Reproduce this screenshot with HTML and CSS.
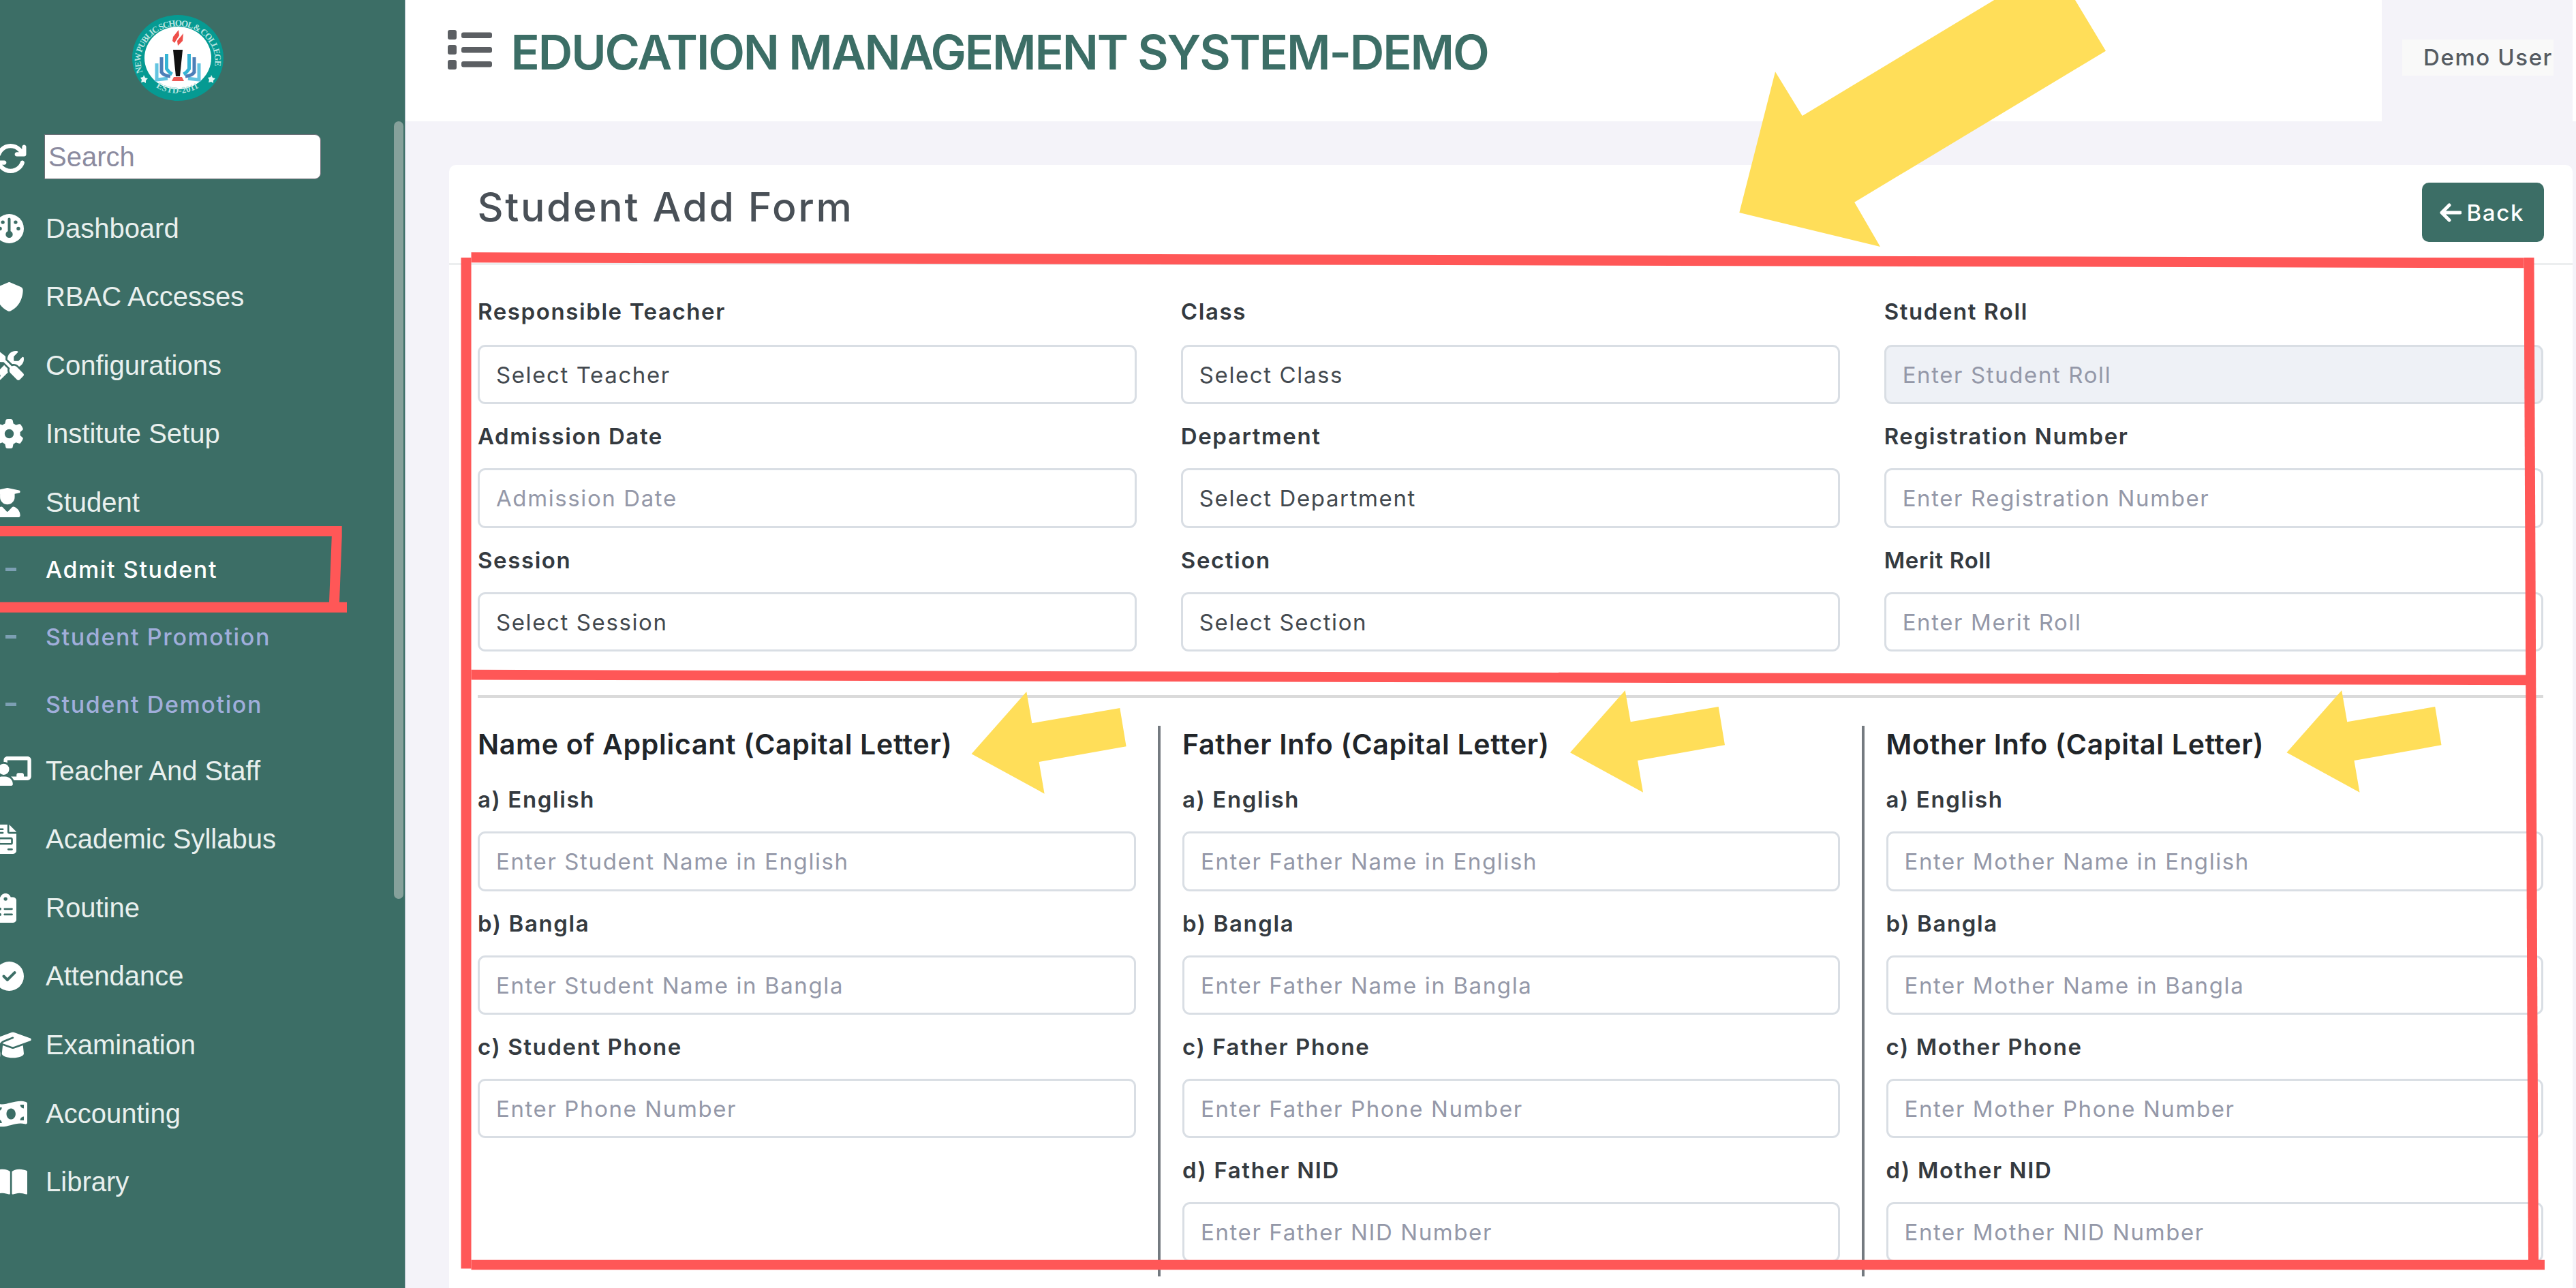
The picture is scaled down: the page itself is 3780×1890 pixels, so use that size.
FILE: index.html
```html
<!DOCTYPE html>
<html lang="en">
<head>
<meta charset="utf-8">
<title>Education Management System</title>
<link rel="stylesheet" href="styles.css">
</head>
<body>
<div class="app">
  <aside class="sidebar">
    <svg class="logo" viewBox="0 0 134 126" preserveAspectRatio="none">
      <defs>
        <path id="ring-top" d="M15.500 84 A54.500 51 0 1 1 118.500 84"/>
        <path id="ring-bottom" d="M22 95 A58 54 0 0 0 112 95"/>
      </defs>
      <ellipse cx="67" cy="63" rx="67" ry="63" fill="#069a92"/>
      <ellipse cx="67" cy="63" rx="49" ry="46" fill="#fff"/>
      <text class="logo-text"><textPath href="#ring-top" textLength="190">NEW PUBLIC SCHOOL &amp; COLLEGE</textPath></text>
      <text class="logo-text"><textPath href="#ring-bottom" startOffset="17" textLength="66">ESTD-2011</textPath></text>
      <path d="M17 88l2 4 4 1-3 3 0 4-3-2-4 1 1-4-2-3 4-1z M116 88l2 4 4 1-3 3 0 4-3-2-4 1 1-4-2-3 4-1z" fill="#e8f6f4"/>
      <path d="M68 22l-8 10 -1 6 3 3 7-11z M75 27l-9 11 1 7 7-7z" fill="#ee4f4a"/>
      <path d="M60 51h14l-4 39h-6z" fill="#111"/>
      <path d="M61 91h12l3 6H58z" fill="#ee5a55"/>
      <g fill="none" stroke-width="5">
        <path d="M36 71v24q10-1 16-2 M98 71v24q-10-1-16-2" stroke="#63c4e0"/>
        <path d="M43 62v22q3 5 13 6 M91 62v22q-3 5-13 6" stroke="#4d7fb8"/>
        <path d="M50.500 57v22q3 5 8 8 M83.500 57v22q-3 5-8 8" stroke="#35b4d4"/>
      </g>
    </svg>
    <div class="search-row">
      <svg class="refresh" viewBox="0 0 512 512"><path d="M105.100 202.600c7.700-21.800 20.200-42.300 37.800-59.800c62.500-62.500 163.800-62.500 226.300 0L386.300 160H352c-17.700 0-32 14.300-32 32s14.300 32 32 32H463.900c17.700 0 32-14.300 32-32V80c0-17.700-14.300-32-32-32s-32 14.300-32 32v35.200L414.400 97.600c-87.500-87.500-229.300-87.500-316.800 0C73.200 122 55.600 150.700 44.800 181.400c-5.900 16.700 2.900 34.900 19.500 40.800s34.900-2.900 40.800-19.500zM39 289.300c-5 1.500-9.800 4.200-13.700 8.200c-4 4-6.700 8.800-8.100 14c-.3 1.200-.6 2.500-.8 3.800c-.3 1.700-.4 3.400-.4 5.100V432c0 17.700 14.300 32 32 32s32-14.300 32-32V396.900l17.600 17.500c87.500 87.400 229.300 87.400 316.700 0c24.400-24.400 42.100-53.100 52.900-83.700c5.900-16.700-2.900-34.900-19.500-40.800s-34.900 2.900-40.800 19.500c-7.700 21.800-20.200 42.300-37.800 59.800c-62.500 62.500-163.800 62.500-226.300 0L125.600 352H160c17.700 0 32-14.300 32-32s-14.300-32-32-32H48.400c-1.600 0-3.200 .1-4.800 .3s-3.100 .5-4.600 1z"/></svg>
      <div class="search-box">Search</div>
    </div>
    <ul class="menu">
      <li><span class="ico"><svg viewBox="0 0 512 512"><circle cx="256" cy="256" r="256"/><g class="cut"><circle cx="144" cy="144" r="32"/><circle cx="368" cy="144" r="32"/><circle cx="96" cy="256" r="32"/><circle cx="416" cy="256" r="32"/><circle cx="256" cy="356" r="62"/><rect x="232" y="64" width="48" height="270" rx="24"/></g></svg></span>Dashboard</li>
      <li><span class="ico"><svg viewBox="0 0 512 512"><path d="M269.400 2.900C265.200 1 260.700 0 256 0s-9.200 1-13.400 2.900L54.300 82.800c-22 9.300-38.400 31-38.300 57.200c.5 99.200 41.300 280.700 213.600 363.200c16.700 8 36.100 8 52.800 0C454.700 420.700 495.500 239.200 496 140c.1-26.200-16.300-47.900-38.300-57.200L269.400 2.900z"/></svg></span>RBAC Accesses</li>
      <li><span class="ico"><svg viewBox="0 0 512 512"><path d="M78.600 5C69.100-2.400 55.600-1.500 47 7L7 47c-8.500 8.500-9.400 22-2.100 31.600l80 104c4.500 5.900 11.600 9.400 19 9.400h54.100l109 109c-14.700 29-10 65.400 14.300 89.600l112 112c12.500 12.500 32.800 12.500 45.300 0l64-64c12.500-12.500 12.500-32.800 0-45.300l-112-112c-24.200-24.200-60.600-29-89.600-14.300l-109-109V104c0-7.500-3.500-14.500-9.400-19L78.600 5zM19.900 396.100C7.200 408.800 0 426.100 0 444.100C0 481.600 30.400 512 67.900 512c18 0 35.300-7.200 48-19.900L233.700 374.300c-7.800-20.900-9-43.600-3.600-65.100l-61.700-61.700L19.900 396.100zM512 144c0-10.500-1.100-20.700-3.200-30.500c-2.400-11.200-16.100-14.100-24.200-6l-63.900 63.900c-3 3-7.100 4.700-11.300 4.700H352c-8.800 0-16-7.200-16-16V102.600c0-4.200 1.700-8.300 4.700-11.300l63.900-63.900c8.100-8.100 5.200-21.800-6-24.200C388.700 1.100 378.500 0 368 0C288.500 0 224 64.500 224 144l0 .8 85.300 85.300c36-9.100 75.800 .5 104 28.700L429 274.500c49-23 83-72.800 83-130.500zM56 432a24 24 0 1 1 48 0 24 24 0 1 1 -48 0z"/></svg></span>Configurations</li>
      <li><span class="ico"><svg viewBox="0 0 512 512"><path d="M495.900 166.600c3.200 8.700 .5 18.400-6.400 24.600l-43.300 39.400c1.100 8.300 1.700 16.800 1.700 25.400s-.6 17.100-1.700 25.400l43.300 39.400c6.900 6.200 9.600 15.900 6.400 24.600c-4.400 11.900-9.700 23.300-15.800 34.300l-4.700 8.100c-6.600 11-14 21.400-22.100 31.200c-5.900 7.200-15.700 9.600-24.500 6.800l-55.700-17.700c-13.400 10.300-28.200 18.900-44 25.400l-12.500 57.100c-2 9.100-9 16.300-18.200 17.800c-13.800 2.300-28 3.500-42.500 3.500s-28.700-1.200-42.500-3.500c-9.200-1.500-16.200-8.700-18.200-17.800l-12.500-57.100c-15.800-6.500-30.600-15.100-44-25.400L83.100 425.900c-8.800 2.800-18.600 .3-24.500-6.800c-8.100-9.800-15.500-20.200-22.100-31.200l-4.700-8.100c-6.100-11-11.400-22.400-15.800-34.300c-3.200-8.700-.5-18.400 6.400-24.600l43.300-39.400C64.600 273.100 64 264.600 64 256s.6-17.100 1.700-25.400L22.400 191.200c-6.900-6.200-9.600-15.900-6.400-24.600c4.400-11.900 9.700-23.300 15.800-34.300l4.700-8.100c6.600-11 14-21.400 22.100-31.200c5.900-7.200 15.700-9.600 24.500-6.800l55.700 17.700c13.400-10.300 28.200-18.900 44-25.400l12.500-57.100c2-9.100 9-16.300 18.200-17.800C227.300 1.200 241.500 0 256 0s28.700 1.200 42.500 3.500c9.200 1.500 16.200 8.700 18.200 17.800l12.500 57.100c15.800 6.500 30.600 15.100 44 25.400l55.700-17.700c8.800-2.800 18.600-.3 24.500 6.800c8.100 9.800 15.500 20.200 22.100 31.200l4.700 8.100c6.100 11 11.400 22.400 15.800 34.300zM256 336a80 80 0 1 0 0-160 80 80 0 1 0 0 160z"/></svg></span>Institute Setup</li>
      <li><span class="ico"><svg viewBox="0 0 448 512"><path d="M219.300 .5c3.100-.6 6.300-.6 9.400 0l200 40C439.900 42.700 448 52.600 448 64s-8.100 21.300-19.300 23.500L352 102.900V160c0 70.700-57.300 128-128 128s-128-57.300-128-128V102.900L48 93.300v65.100l15.700 78.400c.9 4.700-.3 9.600-3.300 13.300s-7.600 5.900-12.400 5.900H16c-4.800 0-9.300-2.100-12.400-5.900s-4.300-8.600-3.300-13.300L16 158.400V86.600C6.500 83.300 0 74.300 0 64C0 52.600 8.100 42.700 19.300 40.500l200-40zM111.900 327.700c10.500-3.400 21.800 .4 29.400 8.500l71 75.500c6.300 6.700 17 6.700 23.300 0l71-75.500c7.600-8.100 18.900-11.900 29.400-8.500C401 348.600 448 409.400 448 481.300c0 17-13.800 30.700-30.700 30.700H30.700C13.800 512 0 498.200 0 481.300c0-71.900 47-132.700 111.900-153.600z"/></svg></span>Student</li>
      <li class="sub active"><span class="dash"></span>Admit Student</li>
      <li class="sub"><span class="dash"></span>Student Promotion</li>
      <li class="sub last"><span class="dash"></span>Student Demotion</li>
      <li><span class="ico"><svg viewBox="0 0 640 512"><path d="M160 64c0-35.300 28.700-64 64-64H576c35.300 0 64 28.700 64 64V352c0 35.300-28.700 64-64 64H336.800c-11.800-25.500-29.900-47.500-52.400-64H384V320c0-17.700 14.300-32 32-32h64c17.700 0 32 14.300 32 32v32h64V64L224 64v49.100C205.200 102.200 183.300 96 160 96V64zm0 64a96 96 0 1 1 0 192 96 96 0 1 1 0-192zM133.300 352h53.300C260.300 352 320 411.700 320 485.300c0 14.700-11.900 26.700-26.700 26.700H26.700C11.900 512 0 500.100 0 485.300C0 411.700 59.700 352 133.300 352z"/></svg></span>Teacher And Staff</li>
      <li><span class="ico"><svg viewBox="0 0 384 512"><path fill-rule="evenodd" d="M64 0C28.700 0 0 28.700 0 64V448c0 35.300 28.700 64 64 64H320c35.300 0 64-28.700 64-64V160H256c-17.700 0-32-14.300-32-32V0H64zM256 0V128H384L256 0zM80 64h64c8.800 0 16 7.200 16 16s-7.200 16-16 16H80c-8.800 0-16-7.200-16-16s7.200-16 16-16zm0 64h64c8.800 0 16 7.200 16 16s-7.200 16-16 16H80c-8.800 0-16-7.200-16-16s7.200-16 16-16zm16 96H288c17.700 0 32 14.300 32 32v64c0 17.700-14.300 32-32 32H96c-17.700 0-32-14.300-32-32V256c0-17.700 14.300-32 32-32zm0 32v64H288V256H96zM240 416h64c8.800 0 16 7.200 16 16s-7.200 16-16 16H240c-8.800 0-16-7.200-16-16s7.200-16 16-16z"/></svg></span>Academic Syllabus</li>
      <li><span class="ico"><svg viewBox="0 0 384 512"><path fill-rule="evenodd" d="M192 0c-41.800 0-77.400 26.700-90.500 64H64C28.700 64 0 92.700 0 128V448c0 35.300 28.700 64 64 64H320c35.300 0 64-28.700 64-64V128c0-35.300-28.700-64-64-64H282.500C269.400 26.700 233.800 0 192 0zm0 64a32 32 0 1 1 0 64 32 32 0 1 1 0-64zM72 272a24 24 0 1 1 48 0 24 24 0 1 1 -48 0zm104-16H304c8.800 0 16 7.200 16 16s-7.200 16-16 16H176c-8.800 0-16-7.200-16-16s7.200-16 16-16zM72 368a24 24 0 1 1 48 0 24 24 0 1 1 -48 0zm88 0c0-8.800 7.200-16 16-16H304c8.800 0 16 7.200 16 16s-7.200 16-16 16H176c-8.800 0-16-7.200-16-16z"/></svg></span>Routine</li>
      <li><span class="ico"><svg viewBox="0 0 512 512"><path fill-rule="evenodd" d="M256 512A256 256 0 1 0 256 0a256 256 0 1 0 0 512zM369 209L241 337c-9.400 9.400-24.600 9.400-33.900 0l-64-64c-9.400-9.400-9.400-24.600 0-33.900s24.600-9.400 33.900 0l47 47L335 175c9.400-9.400 24.600-9.400 33.900 0s9.400 24.600 0 33.900z"/></svg></span>Attendance</li>
      <li><span class="ico"><svg viewBox="0 0 640 512"><path d="M320 32c-8.100 0-16.100 1.400-23.700 4.100L15.800 137.400C6.300 140.900 0 149.900 0 160s6.300 19.100 15.800 22.600l57.900 20.900C57.300 229.300 48 259.800 48 291.900v28.100c0 28.400-10.800 57.700-22.300 80.800c-6.500 13-13.900 25.800-22.500 37.600C0 442.700-.9 448.300 .9 453.400s6 8.900 11.200 10.200l64 16c4.200 1.100 8.700 .3 12.400-2s6.300-6.100 7.100-10.400c8.600-42.800 4.300-81.200-2.100-108.700C90.300 344.300 86 329.800 80 316.500V291.900c0-30.200 10.200-58.700 27.900-81.500c12.900-15.500 29.600-28 49.200-35.700l157-61.700c8.200-3.200 17.500 .8 20.700 9s-.8 17.500-9 20.700l-157 61.700c-12.400 4.900-23.300 12.400-32.200 21.600l159.600 57.600c7.600 2.700 15.600 4.100 23.700 4.100s16.100-1.400 23.700-4.100L624.200 182.600c9.500-3.400 15.800-12.500 15.800-22.600s-6.300-19.100-15.800-22.600L343.700 36.100C336.100 33.400 328.100 32 320 32zM128 408c0 35.300 86 72 192 72s192-36.700 192-72L496.700 262.600 354.500 314c-11.100 4-22.800 6-34.500 6s-23.500-2-34.500-6L143.300 262.600 128 408z"/></svg></span>Examination</li>
      <li><span class="ico"><svg viewBox="0 0 576 512"><path fill-rule="evenodd" d="M0 112.500V422.300c0 18 10.100 35 27 41.300c87 32.500 174 10.300 261-11.900c79.800-20.300 159.600-40.700 239.300-18.900c23 6.300 48.700-9.500 48.700-33.400V89.700c0-18-10.100-35-27-41.300C462 15.900 375 38.100 288 60.300C208.200 80.600 128.400 100.900 48.700 79.100C25.600 72.800 0 88.600 0 112.500zM288 352c-44.200 0-80-43-80-96s35.800-96 80-96s80 43 80 96s-35.800 96-80 96zM64 352c35.300 0 64 28.700 64 64H64V352zm64-208c0 35.300-28.700 64-64 64V144h64zM512 304v64H448c0-35.300 28.700-64 64-64zM448 96h64v64c-35.300 0-64-28.700-64-64z"/></svg></span>Accounting</li>
      <li><span class="ico"><svg viewBox="0 0 576 512"><path d="M249.600 471.500c10.800 3.800 22.400-4.100 22.400-15.500V78.600c0-4.200-1.600-8.400-5-11C247.400 52 202.400 32 144 32C93.500 32 46.300 45.300 18.100 56.100C6.800 60.500 0 71.700 0 83.800V454.100c0 11.900 12.800 20.200 24.100 16.500C55.600 460.100 105.500 448 144 448c33.900 0 79 14 105.600 23.500zm76.800 0C353 462 398.100 448 432 448c38.500 0 88.400 12.100 119.900 22.600c11.300 3.800 24.100-4.600 24.100-16.500V83.800c0-12.100-6.800-23.300-18.100-27.600C529.700 45.300 482.500 32 432 32c-58.400 0-103.400 20-123 35.600c-3.300 2.600-5 6.800-5 11V456c0 11.400 11.700 19.300 22.400 15.500z"/></svg></span>Library</li>
    </ul>
    <div class="scroll-thumb"></div>
  </aside>

  <main class="main">
    <header class="topbar">
      <div class="topbar-left">
        <svg class="list-icon" viewBox="0 0 65 58"><rect x="0" y="0" width="13" height="14" rx="3"/><rect x="0" y="22" width="13" height="14" rx="3"/><rect x="0" y="44" width="13" height="14" rx="3"/><rect x="20" y="3.500" width="45" height="8.500" rx="3"/><rect x="20" y="25" width="45" height="8.500" rx="3"/><rect x="20" y="46" width="45" height="8.500" rx="3"/></svg>
        <h1>EDUCATION MANAGEMENT SYSTEM-DEMO</h1>
      </div>
      <div class="topbar-right"><span class="user">Demo User</span></div>
    </header>
    <section class="card">
      <div class="card-head">
        <h2>Student Add Form</h2>
        <button class="back"><svg viewBox="0 0 32 28"><path d="M30 14H4M14 3L3 14l11 11"/></svg>Back</button>
      </div>
      <div class="card-body">
        <div class="grid">
          <div class="field first"><label>Responsible Teacher</label><div class="input select">Select Teacher</div></div>
          <div class="field first"><label>Class</label><div class="input select">Select Class</div></div>
          <div class="field first"><label>Student Roll</label><div class="input disabled">Enter Student Roll</div></div>
          <div class="field"><label>Admission Date</label><div class="input">Admission Date</div></div>
          <div class="field"><label>Department</label><div class="input select">Select Department</div></div>
          <div class="field"><label>Registration Number</label><div class="input">Enter Registration Number</div></div>
          <div class="field"><label>Session</label><div class="input select">Select Session</div></div>
          <div class="field"><label>Section</label><div class="input select">Select Section</div></div>
          <div class="field"><label class="tight">Merit Roll</label><div class="input">Enter Merit Roll</div></div>
        </div>
        <div class="rule"></div>
        <div class="people">
          <div class="person">
            <h3>Name of Applicant (Capital Letter)</h3>
            <div class="field"><label>a) English</label><div class="input">Enter Student Name in English</div></div>
            <div class="field"><label>b) Bangla</label><div class="input">Enter Student Name in Bangla</div></div>
            <div class="field"><label>c) Student Phone</label><div class="input">Enter Phone Number</div></div>
          </div>
          <div class="person">
            <h3>Father Info (Capital Letter)</h3>
            <div class="field"><label>a) English</label><div class="input">Enter Father Name in English</div></div>
            <div class="field"><label>b) Bangla</label><div class="input">Enter Father Name in Bangla</div></div>
            <div class="field"><label>c) Father Phone</label><div class="input">Enter Father Phone Number</div></div>
            <div class="field"><label>d) Father NID</label><div class="input">Enter Father NID Number</div></div>
          </div>
          <div class="person">
            <h3>Mother Info (Capital Letter)</h3>
            <div class="field"><label>a) English</label><div class="input">Enter Mother Name in English</div></div>
            <div class="field"><label>b) Bangla</label><div class="input">Enter Mother Name in Bangla</div></div>
            <div class="field"><label>c) Mother Phone</label><div class="input">Enter Mother Phone Number</div></div>
            <div class="field"><label>d) Mother NID</label><div class="input">Enter Mother NID Number</div></div>
          </div>
        </div>
      </div>
    </section>
  </main>

  <!-- Tutorial annotations drawn over the page -->
  <svg class="marks" viewBox="0 0 3780 1890">
    <g fill="#ff5757">
      <path d="M0 772H501.700V787L498 883.500H509V898.700H0V883.500H483L486.800 787H0z"/>
      <path d="M676.500 378H691.500V1861.500H676.500z"/>
      <path d="M691.500 370.300L3703.500 378.300V393.300L691.500 385.300z"/>
      <path d="M3703.500 378H3718.500L3725 1850H3710z"/>
      <path d="M691.500 982.800L3707 990.500V1005.200L691.500 997.500z"/>
      <path d="M691.500 1848.700H3734V1863.300H691.500z"/>
    </g>
    <g fill="#ffde59">
      <path d="M2926.300 0H3045L3090 74.700 2721.200 296.700 2759 362 2552.300 312 2605 105.300 2644.700 170z"/>
      <path id="arrow" d="M2304 1104.300L2384.700 1013 2392.700 1059.300 2521.700 1037 2531 1093.300 2403 1116 2411 1162.700z"/>
      <use href="#arrow" x="-878.400" y="2"/>
      <use href="#arrow" x="1051.500"/>
    </g>
  </svg>
</div>
</body>
</html>
```
FILE: styles.css
```css
* { box-sizing: border-box; }
html, body { margin: 0; padding: 0; }
body { background: #f4f3f9; font-family: Inter, "Open Sans", sans-serif; }
h1, h2, h3, ul { margin: 0; padding: 0; }

.app { position: relative; display: flex; width: 3780px; height: 1890px; overflow: hidden; }

/* Sidebar */
.sidebar { position: relative; width: 595px; flex: none; background: #3c6e66; border-right: 1px solid #aab9c4; overflow: hidden; font-family: "Liberation Sans", Arial, sans-serif; font-size: 40px; }
.logo { display: block; width: 134px; height: 126px; margin: 22px 0 0 194px; }
.logo-text { font-family: "Liberation Serif", serif; font-size: 13px; font-weight: bold; fill: #b9e4e0; }
.search-row { display: flex; align-items: center; height: 68px; margin-top: 48px; }
.refresh { width: 49px; height: 49px; margin-left: -9px; margin-top: 5px; flex: none; fill: #fff; }
.search-box { width: 406px; height: 66px; margin-left: 25px; padding-left: 5px; line-height: 65px; background: #fff; border: 1px solid #6f6f78; border-radius: 0 9px 9px 0; color: #8b8b9f; }
.menu { list-style: none; margin-top: 20.800px; color: #e9f0ee; }
.menu li { display: flex; align-items: center; height: 100.600px; white-space: nowrap; }
.ico { display: flex; width: 75px; margin-left: -8px; flex: none; }
.ico svg { height: 43px; width: auto; fill: #fff; }
.ico .cut { fill: #3c6e66; }
.menu .sub { height: 97.700px; font: 500 34px Inter, sans-serif; letter-spacing: 1.600px; color: #a0aedb; }
.menu .sub.active { padding-bottom: 3px; color: #fff; }
.menu .sub.last { padding-top: 4px; }
.dash { width: 16px; height: 5px; margin: 0 43px 0 8px; background: #7c9fb3; }
.scroll-thumb { position: absolute; left: 578px; top: 178px; width: 14px; height: 1141px; border-radius: 7px; background: #86a19b; }

/* Main area */
.main { flex: 1; display: flex; flex-direction: column; min-width: 0; }
.topbar { display: flex; height: 178px; background: #fff; }
.topbar-left { display: flex; width: 2900px; padding: 44px 0 0 61.500px; }
.list-icon { width: 65px; height: 58px; fill: #5c5f63; flex: none; }
h1 { margin-left: 28px; font-size: 70px; line-height: 66px; font-weight: 600; letter-spacing: -2.150px; color: #3c6e66; white-space: nowrap; }
.topbar-right { width: 280px; padding: 58px 0 0 30px; background: #f4f3f9; }
.user { display: block; width: 222px; height: 53px; padding-left: 31px; line-height: 53px; font-size: 33px; font-weight: 500; letter-spacing: 1.600px; color: #555b62; background: #f9f9f9; white-space: nowrap; }

.card { flex: 1; width: 3116px; margin: 64px 0 0 63.500px; background: #fff; border-radius: 10px 10px 0 0; }
.card-head { display: flex; justify-content: space-between; height: 147px; padding: 26px 42px 0; border-bottom: 3px solid #eceeef; }
h2 { font-size: 59px; line-height: 71px; font-weight: 500; letter-spacing: 2.600px; color: #495057; }
.back { display: flex; align-items: center; width: 179px; height: 87px; padding: 0 0 0 26px; gap: 8px; border: 0; border-radius: 10px; background: #3c6e66; color: #fff; font: 500 33px Inter, sans-serif; letter-spacing: 1.700px; }
.back svg { width: 32px; height: 28px; fill: none; stroke: #fff; stroke-width: 5; stroke-linecap: round; stroke-linejoin: round; }

.card-body { padding: 16.200px 42.500px 0; }
.grid { display: grid; grid-template-columns: repeat(3, 1fr); column-gap: 64.500px; }
.field label { display: block; height: 94px; line-height: 95px; font-size: 33px; font-weight: 600; letter-spacing: 1.600px; color: #343a40; white-space: nowrap; }
.field.first label { height: 100.800px; line-height: 104px; }
.field label.tight { letter-spacing: .7px; }
.input { height: 87.300px; padding-left: 24px; line-height: 82px; border: 3px solid #d9dee4; border-radius: 11px; font-size: 33px; letter-spacing: 1.600px; color: #9498a8; white-space: nowrap; }
.input.select { color: #43494f; }
.input.disabled { background: #eef1f6; }
.rule { height: 4px; margin-top: 64px; background: #dadada; }
.people { display: grid; grid-template-columns: 1030px 1fr 1fr; height: 808px; margin: 41.600px -32px 0; }
.person { padding: 0 32px; }
.person + .person { border-left: 4px solid #747a80; }
h3 { padding-bottom: 6px; line-height: 55px; font-size: 41px; font-weight: 600; letter-spacing: .7px; color: #212529; white-space: nowrap; }

.marks { position: absolute; left: 0; top: 0; width: 3780px; height: 1890px; }
```
